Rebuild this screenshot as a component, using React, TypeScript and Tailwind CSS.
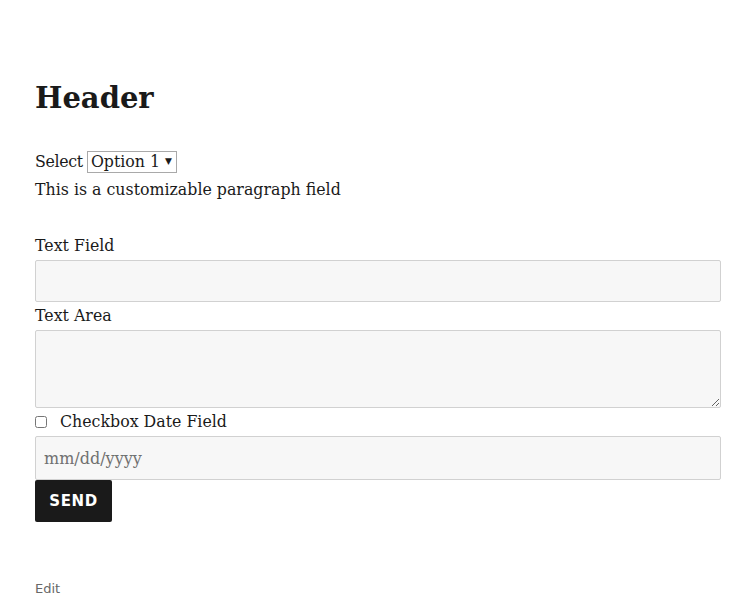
export default function App() {
  return (
    <div className="min-h-[609px] bg-white pl-[35px] pr-[20px] pt-[76px] text-[#1a1a1a] [font-family:'DejaVu_Serif',serif]">
      <h1 className="text-[29px] font-bold leading-[44px]">Header</h1>

      <form className="mt-[30px] text-[15.8px]">
        <div className="flex h-[24px] items-center">
          <label className="mr-[4px] tracking-[-0.02em]">Select</label>
          <div className="flex h-[22px] items-center border border-[#a9a9a9] bg-white pl-[3px] pr-[4px]">
            <span>Option 1</span>
            <span className="ml-[5px] text-[9px]">▼</span>
          </div>
        </div>
        <p className="mt-[4px] leading-[24px]">This is a customizable paragraph field</p>

        <label className="mt-[32px] block leading-[24px]">Text Field</label>
        <input
          type="text"
          className="mt-[2px] block h-[42px] w-full rounded-[2px] border border-[#d1d1d1] bg-[#f7f7f7] px-2"
        />

        <label className="mt-[2px] block leading-[24px]">Text Area</label>
        <textarea className="mt-[2px] block h-[78px] w-full rounded-[2px] border border-[#d1d1d1] bg-[#f7f7f7] px-2" />

        <div className="flex h-[28px] items-center">
          <input type="checkbox" className="h-[12px] w-[12px] accent-gray-400" />
          <label className="ml-[13px]">Checkbox Date Field</label>
        </div>
        <input
          type="text"
          placeholder="mm/dd/yyyy"
          className="block h-[44px] w-full rounded-[2px] border border-[#d1d1d1] bg-[#f7f7f7] px-[8px] text-[16px] placeholder:text-[#707070]"
        />
        <button
          type="button"
          className="block h-[42px] w-[77px] rounded-[2px] bg-[#1a1a1a] text-[15px] font-bold tracking-[0.04em] text-white [font-family:'DejaVu_Sans',sans-serif]"
        >
          SEND
        </button>
      </form>

      <div className="mt-[57px] text-[13px] text-[#686868] [font-family:'DejaVu_Sans',sans-serif]">Edit</div>
    </div>
  );
}
